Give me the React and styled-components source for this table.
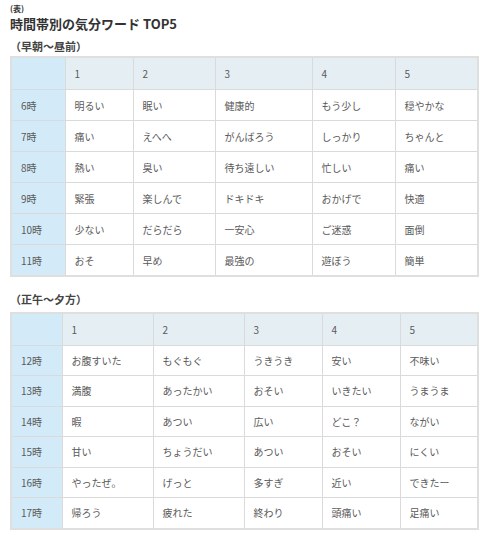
import React from 'react';
import styled, { createGlobalStyle } from 'styled-components';

const GlobalStyle = createGlobalStyle`
  body {
    margin: 0;
    background: #fff;
    font-family: "Noto Sans CJK JP", "Noto Sans", sans-serif;
    color: #555;
  }
`;

const Page = styled.div`
  padding: 3px 10px 0 10px;
  width: 467px;
`;

const Caption = styled.div`
  font-size: 8px;
  font-weight: bold;
  color: #333;
  line-height: 12px;
  height: 12px;
`;

const Title = styled.h2`
  margin: 0;
  font-size: 13px;
  font-weight: bold;
  color: #333;
  line-height: 18px;
`;

const Section = styled.h3`
  margin: ${(p) => p.$top}px 0 0 0;
  font-size: 11px;
  font-weight: bold;
  color: #444;
  line-height: 14px;
  height: ${(p) => p.$height}px;
`;

const Table = styled.table`
  border-collapse: collapse;
  table-layout: fixed;
  width: 467px;
  font-size: 10px;
  color: #5a5a5a;
  border: 2px solid #dfdfdf;
`;

const Cell = styled.td`
  border: 1px solid #dadada;
  height: ${(p) => p.$h}px;
  padding: 0 0 0 9px;
  background: ${(p) => p.$bg || '#fff'};
  vertical-align: middle;
  white-space: nowrap;
  overflow: hidden;
`;

const morning = {
  widths: [54, 68, 82, 97, 83, 83],
  rows: [
    ['6時', '明るい', '眠い', '健康的', 'もう少し', '穏やかな'],
    ['7時', '痛い', 'えへへ', 'がんばろう', 'しっかり', 'ちゃんと'],
    ['8時', '熱い', '臭い', '待ち遠しい', '忙しい', '痛い'],
    ['9時', '緊張', '楽しんで', 'ドキドキ', 'おかげで', '快適'],
    ['10時', '少ない', 'だらだら', '一安心', 'ご迷惑', '面倒'],
    ['11時', 'おそ', '早め', '最強の', '遊ぼう', '簡単'],
  ],
};

const afternoon = {
  widths: [51, 91, 91, 78, 78, 78],
  rows: [
    ['12時', 'お腹すいた', 'もぐもぐ', 'うきうき', '安い', '不味い'],
    ['13時', '満腹', 'あったかい', 'おそい', 'いきたい', 'うまうま'],
    ['14時', '暇', 'あつい', '広い', 'どこ？', 'ながい'],
    ['15時', '甘い', 'ちょうだい', 'あつい', 'おそい', 'にくい'],
    ['16時', 'やったぜ。', 'げっと', '多すぎ', '近い', 'できたー'],
    ['17時', '帰ろう', '疲れた', '終わり', '頭痛い', '足痛い'],
  ],
};

const SIDE = '#d3ebf8';
const HEAD = '#e5eef3';

function WordTable({ data, rowH }) {
  return (
    <Table>
      <colgroup>
        {data.widths.map((w, i) => (
          <col key={i} style={{ width: w }} />
        ))}
      </colgroup>
      <tbody>
        <tr>
          <Cell $h={rowH + 1} $bg={SIDE} />
          {[1, 2, 3, 4, 5].map((n) => (
            <Cell key={n} $h={rowH + 1} $bg={HEAD}>{n}</Cell>
          ))}
        </tr>
        {data.rows.map((row) => (
          <tr key={row[0]}>
            {row.map((text, i) => (
              <Cell key={i} $h={rowH} $bg={i === 0 ? SIDE : undefined}>{text}</Cell>
            ))}
          </tr>
        ))}
      </tbody>
    </Table>
  );
}

export default function App() {
  return (
    <Page>
      <GlobalStyle />
      <Caption>(表)</Caption>
      <Title>時間帯別の気分ワード TOP5</Title>
      <Section $top={6} $height={17}>（早朝～昼前）</Section>
      <WordTable data={morning} rowH={30} />
      <Section $top={15} $height={20}>（正午～夕方）</Section>
      <WordTable data={afternoon} rowH={29.5} />
    </Page>
  );
}
